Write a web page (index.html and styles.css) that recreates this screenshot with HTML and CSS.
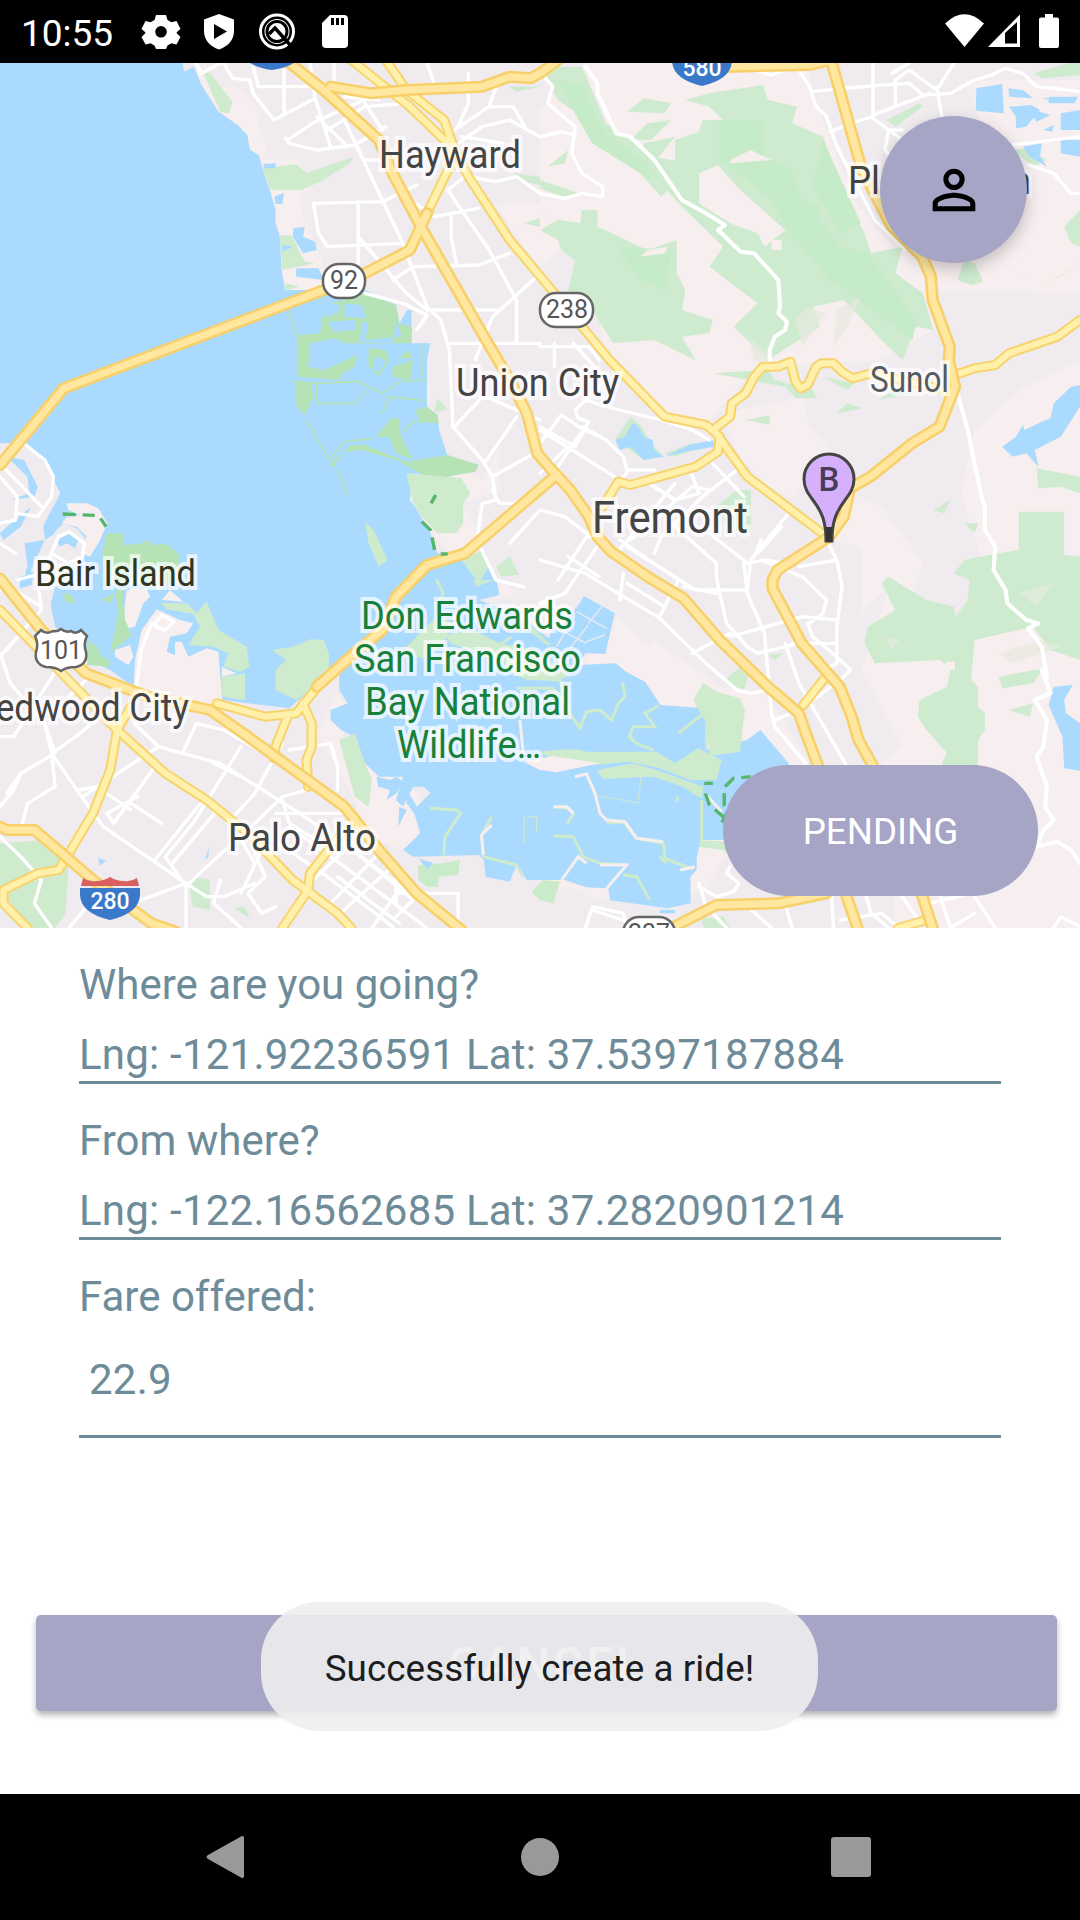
FILE: index.html
```html
<!DOCTYPE html>
<html lang="en">
<head>
<meta charset="utf-8">
<title>Ride request</title>
<link rel="stylesheet" href="styles.css">
</head>
<body>
<div class="screen">
  <header class="statusbar">
    <span class="clock">10:55</span>
    <svg class="status-icons" viewBox="0 0 220 63" aria-hidden="true">
      <g fill="#fff">
        <path fill-rule="evenodd" d="M25 15h10l1.500 5 4 2.200 5-1.200 4 8-3.800 3.200v1l3.800 3.800-4 7.500-5-1.200-4 2.200-1.500 3.500H25l-1.500-3.500-4-2.200-5 1.200-4-7.500 3.800-3.800v-1L10.500 29l4-8 5 1.200 4-2.200zM30 26a5.800 5.800 0 1 0 0 11.600A5.800 5.800 0 0 0 30 26z"/>
        <path fill-rule="evenodd" d="M88 14l15 5.500V31c0 9-6 15.500-15 18.500C79 46.500 73 40 73 31V19.500zM83 24v15l13-7.500z"/>
        <path d="M199 15h14q4 0 4 4v25q0 4-4 4h-18q-4 0-4-4V23z"/>
      </g>
      <circle cx="146" cy="31.500" r="16.500" fill="none" stroke="#fff" stroke-width="3"/>
      <circle cx="146" cy="31.500" r="12.500" fill="#fff"/>
      <circle cx="146" cy="31.500" r="10" fill="none" stroke="#000" stroke-width="3"/>
      <path d="M138 34l6-6 17 19" fill="none" stroke="#000" stroke-width="3.500"/>
      <path d="M201.500 18v7M206.500 18v7M211.500 18v7" stroke="#000" stroke-width="3"/>
    </svg>
    <svg class="signal-icons" viewBox="0 0 120 63" aria-hidden="true">
      <path fill="#fff" d="M0 23.500Q19.500 5 39 23.500L19.500 47z"/>
      <path fill="#fff" fill-rule="evenodd" d="M43 47L75 14.500V47zM60 33V43.500H72V22z"/>
      <path fill="#fff" d="M100 14h8v3.500h4q2 0 2 2V46q0 2-2 2H96q-2 0-2-2V19.500q0-2 2-2h4z"/>
    </svg>
  </header>

  <section class="map">
    <svg class="map-layer" viewBox="0 9 3136 2595" preserveAspectRatio="none" aria-hidden="true">
      <!-- terrain tint -->
      <g fill="#f7eeef">
        <path d="M560 9L590 40 650 80 700 85 755 160 750 200 778 265 755 300 870 300 905 390 870 400 880 480 920 560 940 620 930 700 800 700 750 300 600 150z"/>
        <path d="M1700 0H2340L2370 130 2420 260 2480 420 2560 520 2700 620 2720 800 2560 900 2200 920 2120 1010 2060 1090 1940 1060 1760 880 1700 560 1568 480 1568 150z"/>
        <path d="M1440 430L1568 430 1640 560 1570 620 1500 530z"/>
        <path d="M2100 1060L2330 1010 2350 1100 2420 1180 2300 1320 2220 1270 2140 1180z"/>
        <path d="M2700 600L3136 500V695H2730z"/><path d="M2800 60H3136V700H3010L2960 640 2900 560 2850 200z"/>
        <path d="M3136 900L2960 990 2830 1110 2790 1300 2850 1500 2880 1650 2740 1700 2600 1560 2500 1660 2500 1460 2410 1440 2480 1300 2560 1340 2680 1510 2640 1620 2580 1590 2500 1830 2620 2060 2560 2110 2600 2604H3136z"/>
        <path d="M1790 1670L1890 1760 1900 1740 2090 1880 2220 1900 2280 1990 2350 2110 2100 2400 2040 2500 1568 2480 1700 1800z"/>
        <path d="M1240 870L1260 1200 1400 1260 1450 1160 1450 1290 1340 1330 1390 1420 1380 1500 1500 1600 1450 1620 1300 1480 1180 1300z"/>
        <path d="M980 1900L1020 1960 990 2040 1080 2130 1180 2150 1240 2260 1190 2380 1080 2330 1020 2200 920 2020z"/>
      </g>
      <!-- bay -->
      <path fill="#abdaff" d="M0 9H530L535 35 563 20 585 75 635 155 690 195 718 225 726 270 752 285 768 345 785 395 800 450V490L812 525 818 630 828 690H1060L1150 735 1160 790 1182 750H1195V850H1250L1240 900V1040L1270 1065 1275 1110 1300 1190 1390 1215 1300 1250 1200 1240 1190 1320 1205 1340 1250 1420 1270 1480 1330 1490 1400 1500 1440 1550 1450 1605 1390 1620 1500 1660 1600 1740 1698 1610 1783 1670 1758 1780 1700 1780 1680 1815 1788 1810 1818 1835 1873 1865 1918 1935 2048 1945 2053 2070 2168 2040 2208 2010 2290 2110 2290 2200 2108 2340 2023 2340 2023 2430 2005 2450V2530L1938 2545 1768 2520V2505L1640 2460 1530 2460 1500 2415 1480 2465 1410 2450 1405 2400 1390 2385 1200 2390 1170 2370 1220 2320 1200 2250 1250 2200 1230 2180H1200L1170 2240 1150 2220 1170 2150 1100 2150 1060 2110 1030 2030 990 2010 960 1980V1950L1010 1930 985 1890V1830L910 1880 840 1945 720 1930 650 1920 400 1890 320 1830 260 1800 160 1700 140 1600 75 1550 70 1450 130 1440 125 1390 160 1330 175 1300 150 1250 75 1160 0 1200z"/>
      <!-- Redwood Shores and Bair Island land -->
      <g fill="#efebef"><path d="M0 1150L75 1150 140 1220 173 1300 125 1400 130 1440 70 1440 80 1520 40 1600 0 1540z"/><path d="M130 1440L190 1400 250 1440 240 1500 200 1560 160 1580 130 1700 90 1530z"/></g>
      <path fill="#abdaff" d="M20 1190L70 1200 110 1280 100 1310 30 1320 85 1300 80 1250zM60 1550L95 1540 80 1580zM0 1420L20 1400 90 1340 60 1400 10 1440z"/>
      <g transform="translate(0 1200) scale(.968 1)">
        <path fill="#f7eeef" d="M200 130L260 130 295 145 322 190 300 240 270 290 245 280 260 230 230 200 185 190 200 170 240 165 205 150zM380 390L440 385 450 410 430 430 405 500 385 505 370 470zM485 420L510 390 550 425zM345 570L390 555 400 590 385 615 345 590zM400 700L405 600 425 510 470 448 540 480 580 490 560 520 510 530 500 575 525 585 525 545 545 545 565 590 620 565 655 575 668 735 500 710z"/>
        <path fill="#efebef" d="M190 190L230 205 260 240 240 310 160 330 140 400 95 390 100 300 150 270 165 215z"/>
        <path fill="#ceebce" d="M482 428L560 430 590 460 620 425 655 510 740 560 748 620 720 635 670 620 685 580 640 560 565 555 600 500 580 462 500 448zM665 650L735 640V720L665 710z"/>
        <path fill="#f7eeef" d="M665 620L710 640 665 650z"/>
        <path fill="#abdaff" d="M170 240L210 220 235 240 225 265 200 250 180 260zM60 355L100 335 95 375 60 385z"/>
        <path fill="#b5e3b5" d="M320 220H372V255L430 250 440 240 460 255 495 250 540 285 535 350 480 380 350 370 305 290zM345 390H370L375 480 395 525 330 580 355 460zM190 400L215 405 225 430 195 425zM305 420L340 400 335 430zM262 540L290 560 305 590 330 600 328 620 262 615z"/>
      </g>
      <!-- parks and salt marsh -->
      <g fill="#ceebce">
        <path d="M590 40L610 38 675 125 665 160 640 155z"/><path d="M763 325L860 312 890 340 970 310 1025 292 1015 310 930 365 875 390H785z"/>
        <path d="M812 527L845 525 885 605 915 610 820 630zM828 670L870 680 830 690z"/>
        <path d="M1180 1240L1340 1255 1365 1300 1345 1330 1345 1390 1325 1420 1270 1420 1225 1370 1200 1330z"/>
        <path d="M1060 1385L1085 1410 1125 1500 1100 1520 1070 1450z"/>
        <path d="M800 1830L830 1800 790 1770 850 1760 900 1738 940 1740 955 1780 955 1820 985 1830 910 1880 860 1920 800 1890z"/>
        <path d="M985 2040L1030 2020 1060 2110 1080 2160 1070 2240 1030 2210z"/>
        <path d="M1270 1015L1300 1050 1262 1055z"/>
        <path d="M1440 1520L1480 1490 1508 1545 1455 1550zM1340 1500L1400 1470 1420 1520 1390 1570z"/>
        <path d="M550 2480L570 2450 610 2460V2550L560 2540zM680 2545L710 2540 725 2575zM0 2350L130 2340 200 2410 190 2560 160 2604H90L0 2490z"/>
        <path d="M2100 1865L2150 1820 2175 1840 2160 1890zM2230 1785L2275 1780 2250 1800z"/>
      </g>
      <path fill="#b5e3b5" d="M1060 700L1150 735 1160 790 1195 800V850H1005L970 835 900 850 895 920 940 930 1040 885 1025 925 995 940 985 960 865 950V825L930 820 935 775 980 760 990 735 960 730zM1070 865L1120 870 1130 900 1100 950 1070 920zM1180 870L1200 895H1160zM1140 920L1200 900 1190 960 1140 950zM855 960L900 965 910 1010 885 1065 862 1040zM1090 1130L1140 1070 1160 1080 1160 1120 1200 1200 1150 1180 1130 1130zM1205 1050L1240 1040 1270 1065 1275 1090 1220 1085zM1020 1155L1060 1155 1180 1205 1300 1185 1390 1215 1380 1235 1300 1250 1230 1245 1150 1200 1050 1170 1000 1175 965 1225 955 1215z"/>
      <path fill="none" stroke="#b5e3b5" stroke-width="5" d="M835 750L870 850M900 970L1040 965 1110 1000 1160 965 1240 960M920 970V1030H1030L1065 990M1120 1010L1235 1022M1130 1010L1110 1060M890 1080L955 1200 1000 1145 1080 1135M1165 1120L1200 1085H1270M980 1230L1010 1310M1225 855V950M940 710V790L1060 780 1160 830M1080 760L1070 850"/>
      <path fill="#abdaff" d="M940 725L975 735 970 760 940 765zM1000 730L1050 735 1065 775 1000 770zM1050 785L1070 790 1060 840 1165 830 1160 810 1150 780 1140 850 1045 845zM950 785L1030 780 1035 810 970 815zM1090 890L1120 900 1105 935 1080 930zM765 312L800 310V325H765zM797 410L825 398 820 432H800zM852 505L885 500 880 530 915 545 920 570 880 580 850 530zM820 555L850 560 820 575zM860 625L925 625 940 660 860 650z"/>
      <!-- wildlife refuge ponds -->
      <g transform="translate(987 1560) scale(.968 1)">
        <g fill="#ceebce">
          <path d="M180 220L290 110 340 130 310 190 250 235zM400 0H460L410 20zM320 170L400 150 480 190 590 210 690 290 640 300 560 300 500 260 420 220 330 190z"/>
          <path d="M1090 308L1130 335 1200 355 1215 390 1200 515 1110 528 1098 430 1060 360z"/>
          <path d="M600 515L700 505 740 515 870 515 950 515 1005 550 1075 505 1105 520 1145 540 1130 600 1050 600 960 565 870 545 760 555 640 540z"/>
          <path d="M770 570L880 550 950 570 1090 620 1085 655 1020 620 930 590 790 600zM1000 572L1060 520 1105 530 1100 590 1050 598zM1070 780L1180 785 1200 860 1150 810 1070 800z"/>
        </g>
        <path fill="#abdaff" d="M730 600L940 590 1030 620 1085 660 1082 780 1062 870 1000 860 970 800 890 775 850 725 790 715 750 650zM560 355L690 380 720 450 800 420 850 360 870 440 880 490 860 510 740 510 580 505z"/>
        <g fill="none" stroke="#ceebce" stroke-width="9">
          <path d="M500 265L560 295 660 300 690 400 720 445 740 395 780 390 815 420 835 370 855 350 848 308M530 325L640 325 690 390M955 378L915 400 945 440 880 440 868 470 890 490 940 510M1085 405L1015 460M1100 430V510M320 170L370 155 480 195 515 170M560 130L620 190M270 685L350 690 362 700 315 770 312 825M455 710L425 765 430 830 530 855 550 890M640 680L690 685 700 705 680 730M640 768L700 770 730 830 780 850 860 855M850 885L890 890 930 960M800 730L850 725 890 775 970 790 975 835 1060 868M960 830L980 850M1085 660V780M1010 665L1015 650M290 0L310 40 290 80 320 120M570 150L630 195"/>
          <path stroke-width="3" d="M553 705V790M560 710H590V760M760 645L900 670M905 580L895 660"/>
        </g>
        <path fill="none" stroke="#f7eeef" stroke-width="9" d="M540 420L550 520M705 590L740 582 765 640 780 700 800 720 855 725 890 775 970 785M665 900L715 830 740 850M780 855L860 855 800 925 805 955M640 680L680 680 700 700M455 735L425 765 430 825M1095 640L1145 695M1065 860L1020 870"/>
        <path fill="#f7eeef" d="M550 545L640 528 780 550 650 577 600 570zM700 920L800 925 810 960 760 955z"/>
        <path fill="#abdaff" d="M731 48L825 100 795 165 797 222 735 218 742 190 690 165 620 190 640 140 700 120z"/>
        <path fill="none" stroke="#e8ecf0" stroke-width="4" d="M710 95L800 145M745 130L790 75M620 130L740 190M690 205L745 135M650 200L690 130M740 185L795 165"/>
        <path fill="#c9ebc9" d="M235 855L310 850 360 840 355 885 295 890V920L260 920 235 900zM575 935L610 900 660 905 640 970 600 960z"/>
        <path fill="#abdaff" d="M235 835L280 850 262 868zM110 590L150 600 170 590 190 605 170 640 140 660 150 630 115 620zM195 625L220 660 265 740 245 730 200 670zM178 680L200 690 175 740zM210 790L265 760 230 800zM960 990H1005V1000H960z"/>
      </g>
      <!-- east bay ridge -->
      <g fill="#ceebcf">
        <path d="M2060 100L2215 75 2230 120 2315 140 2300 190 2390 230 2440 370 2510 520 2530 580 2620 560 2600 640 2680 700 2710 810 2660 800 2620 900 2560 840 2450 720 2360 740 2380 800 2290 860 2230 900 2130 800 2200 730 2060 620 2100 560 1980 440 1900 350 1790 260 1740 240 1690 170 1620 120 1568 20H1690L1760 190 1830 240 1900 290 2000 310 2120 300 2030 340 2030 430 2120 490 2200 520 2220 560 2280 510 2140 380 2080 310H1960V240L2030 215 2040 180 2100 180 2060 140 1990 120z"/>
        <path d="M1568 510L1620 480 1685 490 1690 450H1735V500L1880 570 1965 540V640L1990 690 1980 750 2070 780 2060 820 1980 830 2020 900 1900 840 1780 850 1700 720 1650 690 1670 600 1630 570 1620 540z"/>
        <path d="M1820 155L1870 115 1950 130 1930 160zM1830 240L1880 190 1950 180 1890 240zM1870 250L1960 230 1890 320 1980 350 1920 410 1850 330zM1568 360L1680 400 1630 410 1568 385zM1590 320L1650 270 1640 310z"/>
        <path d="M2070 940L2230 930 2250 960 2360 990 2370 1015 2310 1015 2280 980zM2390 950L2480 970 2460 990zM2550 1020L2600 990 2650 1000zM2430 1060L2460 1030 2505 1045zM2165 1080L2235 1065V1095zM2780 660L2800 600 2830 610 2855 665 2820 675zM3090 500L3136 450V560L3110 550zM2575 180L2670 130 2680 140 2600 200zM3000 40L3136 0V45L3030 55zM2940 270L2980 265 3040 300 3000 320zM3010 1225L3136 1250V1300L3080 1280 3015 1285z"/>
        <path d="M2560 1570L2580 1550 2690 1620 2770 1640 2775 1670 2810 1620 2815 1560 2770 1540 2800 1500 2900 1480 2958 1470V1355H3090V1485L3136 1490V1800L3050 1770 3000 1700 2830 1740 2820 1860 2840 1880V1940L2860 1960V2010L2840 2040V2120H2730L2750 2080 2690 2010 2665 1970 2670 1920 2750 1880 2760 1830 2730 1800 2540 1810 2510 1750 2520 1700 2600 1650z"/>
        <path d="M2900 1850L3030 1825 3000 1870 2910 1885zM2930 1950L3000 1930 2990 1970zM2710 1350L2760 1320 2740 1360zM2800 1390H2840L2830 1420zM2080 1340L2140 1290H2180V1420L2110 1400z"/>
        <path d="M1785 1140L1830 1070 1860 1095 1890 1150 1920 1180 1870 1200zM1930 1180L2010 1150 2070 1150 1960 1190z"/>
        <path d="M1490 340L1568 350V375L1500 360zM1520 490L1568 475V500zM1475 80H1568L1500 95z"/>
        <path d="M2035 2575L2100 2570 2120 2604H2045z"/>
      </g>
      <g fill="#c6ebc8">
        <path d="M2090 180L2220 180 2215 290 2300 330 2320 400 2440 560 2520 580 2660 780 2650 840 2470 700 2410 660 2280 500 2240 420 2170 360 2090 300zM2390 240L2500 490 2440 520 2360 380zM1620 60L1690 80 1760 220 1880 310 1890 360 1720 250 1680 180zM1790 560L1950 570 1930 690 1860 660zM2320 420L2380 440 2360 560 2300 540z"/>
      </g>
      <g fill="#e6e9de" opacity=".7"><path d="M2310 780L2340 740 2400 760 2330 860zM2430 750L2500 710 2460 800 2420 860zM2170 830L2230 880 2260 930 2190 900zM2570 1730L2610 1740 2590 1770zM2900 1780L3020 1740 3080 1760 2940 1810zM2960 1600L3060 1570 3010 1640zM3020 680L3136 610 3080 650zM2700 2500L2760 2460 2830 2480z"/></g>
      <path fill="#f7eeef" d="M2240 540h30v30h-30zM2745 1805h28v25h-28zM1880 570L1940 560 1930 580 1860 590zM2120 300L2180 270 2240 300 2120 310zM2700 590L2640 570 2650 630z"/>
      <!-- lakes -->
      <g fill="#abdaff">
        <path d="M2835 85L2910 72 2915 160 2833 152zM2928 85L2970 90 3000 115 2930 110zM2930 140L2995 135 3020 150 2980 200 2950 205V170zM2985 145L3050 165 3010 185zM3025 115H3085V130zM3045 110H3130L3120 130H3045zM3080 160L3136 150V210H3080zM3080 240H3136V290L3080 280zM2970 260L3025 250 3020 290 3040 320 2990 290zM3030 210L3060 195 3055 215z"/>
        <path d="M3136 975L3110 980 3060 1030 3050 1075 3015 1090 2975 1110 2970 1095 2950 1130 2910 1160 2940 1190 2980 1180 3015 1220 3005 1170 3080 1130 3136 1040z"/>
        <path d="M3060 1880L3115 1875 3090 1920 3095 1960 3136 1990V2132L3090 2125 3085 2030 3045 1935z"/>
        <path d="M1787 1140L1815 1130 1835 1090 1850 1095 1870 1130 1895 1140 1900 1170 1928 1190 1870 1200 1830 1160 1800 1170zM1930 1190L2000 1155 2070 1140 2075 1160 1990 1175z"/>
        <path d="M285 2395L308 2402 290 2418zM595 2400L608 2360 605 2390zM2775 1180L2795 1200z"/>
      </g>
      <!-- local streets -->
      <g class="streets">
        <path d="M570 9L585 40 640 10M650 9L675 55 725 60 735 100 795 180 915 115 900 9M735 20L750 80H910M825 30V160M835 240L915 185 1100 100M915 115L960 260M1000 180L1165 540 1240 740 1280 780 1305 870 1315 1100 1400 1200 1430 1250 1440 1320M910 430L925 520 950 560 1170 550M910 430L1110 425 1210 375M1040 425V610M1040 530L1180 700 1240 750H1440M1140 660L1200 620 1390 615 1480 580M1150 390L1260 470 1390 445M1310 470V530L1325 610M1300 390L1420 570 1500 720V845M1570 640L1430 770 1380 900M1305 850H1568M1320 1100L1410 1000M1410 1010L1568 1080M1500 1070L1410 1205M1568 1170L1430 1250M1060 700L1170 730 1240 765 1210 810"/>
        <path d="M830 235L840 250 920 270 1030 255 1120 200M920 170L1010 260M950 210L1060 140 1180 130M1000 110L1100 120M1240 9L1260 70M1360 40V130L1330 200M1320 210L1420 140 1490 140 1530 210M1330 250L1400 200 1480 180 1568 230M1340 230L1460 250M1060 300L1130 300M1060 130L1110 210M970 9V70M1420 140L1440 80M1360 350L1440 365 1500 350 1568 400M1300 390L1350 350"/>
        <path d="M1580 50L1605 80 1590 130 1670 200 1660 280 1690 340 1750 380V410L1690 400 1640 415 1568 400M1568 230L1630 215 1670 225"/>
        <path class="wide" d="M1700 20L1735 70 1735 100 1790 220 1830 230 1900 300 1980 420 2050 460 2105 495 2085 510 2150 575 2190 580 2260 660 2265 740 2260 760 2285 785 2280 810 2250 830 2235 870 2235 900"/>
        <path d="M2320 30L2350 80 2370 140 2400 170 2430 260 2490 380 2540 480 2630 570M2355 95L2560 75 2640 70 2680 105 2760 100 2830 60 2880 45 2920 25 2970 40 3010 80 3060 85 3136 95M2535 9V170L2500 180 2410 215M2535 165L2700 100M2535 175L2620 240M2620 210H2580L2570 270 2620 330M2600 130V60L2640 30 2720 90 2770 9M2720 80L2735 170M2940 255L3136 230M2990 315L3060 340 3110 400H3136M2640 9L2590 40M2190 30L2240 45 2280 30"/>
        <path class="wide" d="M2780 1000L2810 1110 2850 1310 2860 1340V1410L2890 1460 2885 1530 2920 1590 2925 1630 2980 1680 3015 1690 2985 1705 3025 1760 3040 1850 3025 1830 3050 1900 3005 1920 3040 1980 3030 2060 3010 2090 3040 2180 3035 2240 3060 2280 3030 2310 3010 2360 3070 2345 3110 2370 3136 2410"/>
      </g>
      <g class="streets">
        <path d="M1568 860H1710L1740 900M1610 850V920M1665 850L1760 960 1700 1020 1670 1050 1680 1075 1710 1085 1670 1160 1568 1100M1700 1020L1760 1040 1920 1080 2010 1110 2060 1140M1690 1100L1760 1140 1810 1190 1820 1230 1900 1230M1568 1150L1630 1065 1680 1100 1760 1140M1568 1110L1800 1260 1830 1270M1710 1085L1600 1250M1568 1240L1650 1160M1820 1240L1770 1290M1870 1260L1960 1320 2030 1300 2000 1220M1960 1270L1790 1480M2060 1200L2160 1310M2140 1230L2040 1310 1920 1430 1900 1480M1830 1440L2010 1280 2060 1290"/>
        <path d="M1440 1320L1400 1330 1385 1440 1440 1560 1520 1580M1430 1290L1450 1330H1500M1480 1450L1568 1350M1568 1350L1640 1370 1740 1450 1640 1600 1568 1630M1568 1500L1700 1540 1810 1610 1910 1670 2050 1810 2140 1890 2180 1900 2230 1890M1650 1490L1740 1550M1800 1440L1970 1560 1915 1670M1820 1570L1930 1640M1810 1540L1800 1620M1620 1560L1710 1420M1820 1460L2020 1590 2170 1590 2180 1500 2290 1360M1950 1390L2080 1510 2080 1550 2090 1600 2110 1690 2170 1760 2200 1780 2320 1750M2060 1420L2170 1510 2220 1500 2280 1510M2160 1510L2170 1600 2220 1720 2240 1960 2250 2000 2340 2110M2210 1440L2190 1490M2270 1400L2200 1480M2210 1500L2330 1550 2400 1620 2390 1660 2350 1690M2120 1730L2330 1670 2430 1680M2010 1780L2120 1720M2280 1750L2320 1870 2370 1960 2460 2120M2400 1440L2430 1500 2445 1580 2430 1700V1810L2390 1830M2320 1520L2430 1500M2345 1690L2360 1730 2430 1790 2470 1830 2440 1860 2360 1920M2250 1980L2320 1950M2300 1750H2430M1985 1580L2080 1600"/>
        <path d="M1700 2604L1720 2540 1810 2560 1820 2604M1720 2550L1880 2604M2030 2480L2080 2510 2130 2495 2145 2470 2110 2440 2120 2420M2030 2470L2050 2540 2110 2604M2160 2530L2240 2604M2280 2530L2300 2604M2415 2510L2420 2604M2515 2510L2530 2560 2580 2604M2620 2510L2660 2570M2730 2510L2760 2604 2830 2560M2830 2510L2890 2604M2440 2580L2560 2560 2610 2604M2700 2530L2820 2500M3060 2604L3080 2570 3136 2600"/>
        <path d="M0 1250L50 1310 45 1380 0 1390M75 1155L130 1200 155 1250 150 1310 110 1370 50 1360M0 1210L120 1340M0 1450L45 1480M110 1570L170 1430 200 1415 245 1450 240 1490 200 1510 150 1480M110 1570L120 1650 60 1720 0 1790M50 1560L120 1540M40 1590L120 1640M20 1560L0 1590M480 1710L440 1690 410 1770 395 1890M450 1690L470 1665 505 1685 480 1710 450 1700"/>
        <path d="M0 1780L30 1870 130 1990 150 2080 230 2200 300 2300 540 2470 600 2510 650 2510 740 2470M0 2030H40L170 1820M260 1850L200 1910M130 1990L160 2080 60 2140 40 2190 0 2240M60 2310L80 2230 160 2180 150 2080 220 2030 290 1970M60 2140L20 2200M390 1990L460 2060 530 2080 640 2110 870 2260 1010 2360 1190 2500 1300 2590M530 2080L570 1990 650 2010 750 2070M460 2060L240 2210M400 2210L310 2260 330 2290 450 2120M230 2190L280 2180 380 2250M590 2220L450 2400M640 2240L500 2410M700 2060L560 2290 480 2390 540 2480V2604M820 2050L740 2200 660 2290M840 2070L960 2050 980 2120V2190M890 2190L820 2210 740 2290 600 2420 540 2480M620 2110L700 2150M0 2330L60 2390 120 2460 100 2530 150 2604M200 2604L260 2530 410 2520 540 2470M380 2230L470 2290M640 2460L620 2530 700 2604M740 2380L770 2450 720 2500 760 2560 800 2540M700 2340L740 2410M760 2370L700 2500"/>
        <path d="M800 2260H1000M780 2330L950 2450 1140 2600M840 2300L1040 2450 1240 2604M1040 2330L900 2470 860 2530M1100 2380L960 2530M1140 2420L1030 2520 990 2560M1180 2460L1080 2604M1150 2430V2530M1160 2500H1330V2604M1210 2510L1150 2570M820 2220L840 2290 950 2360M1060 2400L1200 2520M980 2450L1160 2590"/>
      </g>
      <!-- regional roads -->
      <g class="minor-case">
        <path d="M1310 240L1360 350 1480 540 1610 700 1770 900 1930 1070 2050 1095 2080 1120 2170 1250 2260 1320 2400 1430"/><path d="M2070 1110L2120 1070 2125 1030 2165 1000 2190 950 2215 920 2260 920 2295 905 2310 965 2325 985 2345 975 2370 920 2385 910 2420 910 2445 935 2475 955 2530 940 2700 980 2760 995"/><path d="M2773 945L2830 925 2890 915 2930 880 3070 830 3136 780"/><path d="M2090 1130L2085 1175 2020 1220 1830 1275 1795 1265 1750 1340"/><path d="M0 1650L180 1840 330 2000 480 2140 600 2220 720 2320 850 2460 980 2560 1020 2604"/><path d="M380 1940L340 2010 320 2130 270 2260 200 2380 170 2430 110 2440 10 2490 10 2530 80 2604"/><path d="M1000 2310L900 2440 895 2490 820 2604"/><path d="M930 1870L860 1960 770 1970 630 1930M880 1930L905 1990V2060L890 2100 895 2180M835 1970L800 2060 795 2095M1310 240V310L1240 460M1020 0L1190 140 1310 260M1120 0L1180 90 1290 180 1310 240M2608 2604L2690 2580M2333 1935L2390 1860"/>
      </g>
      <g class="minor-fill">
        <path d="M1310 240L1360 350 1480 540 1610 700 1770 900 1930 1070 2050 1095 2080 1120 2170 1250 2260 1320 2400 1430"/><path d="M2070 1110L2120 1070 2125 1030 2165 1000 2190 950 2215 920 2260 920 2295 905 2310 965 2325 985 2345 975 2370 920 2385 910 2420 910 2445 935 2475 955 2530 940 2700 980 2760 995"/><path d="M2773 945L2830 925 2890 915 2930 880 3070 830 3136 780"/><path d="M2090 1130L2085 1175 2020 1220 1830 1275 1795 1265 1750 1340"/><path d="M0 1650L180 1840 330 2000 480 2140 600 2220 720 2320 850 2460 980 2560 1020 2604"/><path d="M380 1940L340 2010 320 2130 270 2260 200 2380 170 2430 110 2440 10 2490 10 2530 80 2604"/><path d="M1000 2310L900 2440 895 2490 820 2604"/><path d="M930 1870L860 1960 770 1970 630 1930M880 1930L905 1990V2060L890 2100 895 2180M835 1970L800 2060 795 2095M1310 240V310L1240 460M1020 0L1190 140 1310 260M1120 0L1180 90 1290 180 1310 240M2608 2604L2690 2580M2333 1935L2390 1860"/>
      </g>
      <!-- freeways -->
      <g class="major-case">
        <path d="M830 0L940 90 1100 240 1140 340 1222 500 1400 820 1480 960 1530 1060 1560 1180 1598 1225 1656 1290 1710 1370 1735 1430 1775 1475 1880 1550 1985 1615 2090 1740 2230 1880 2320 1960 2340 2020 2380 2130 2458 2508 2490 2604"/><path d="M2413 0L2503 330 2590 500 2678 590 2703 650 2708 720 2758 860 2755 900 2773 980 2728 1100 2648 1150 2528 1250 2468 1285 2450 1370 2408 1430 2258 1530 2243 1560V1585L2328 1750 2438 1880 2473 1970 2493 2040 2533 2115 2678 2508 2708 2604"/><path d="M0 1215L185 985 940 690 1060 640 1190 570 1222 500 1240 460"/><path d="M960 80L1080 100 1180 90 1400 80 1480 50 1540 55 1568 40 1620 0"/><path d="M2000 25L2130 20 2350 15 2413 0"/><path d="M1610 1250L1350 1480 1240 1515 1150 1610 1110 1710 1040 1770 920 1880"/><path d="M0 1555L120 1710 250 1840 430 1910 610 1950 720 2030 880 2150 1000 2240 1100 2370 1210 2500 1340 2610"/><path d="M0 2300L20 2310H100L180 2380 270 2460 400 2560 440 2590 510 2615"/><path d="M1950 2604L2080 2535 2260 2530 2400 2500"/>
      </g>
      <g class="major-fill">
        <path d="M830 0L940 90 1100 240 1140 340 1222 500 1400 820 1480 960 1530 1060 1560 1180 1598 1225 1656 1290 1710 1370 1735 1430 1775 1475 1880 1550 1985 1615 2090 1740 2230 1880 2320 1960 2340 2020 2380 2130 2458 2508 2490 2604"/><path d="M2413 0L2503 330 2590 500 2678 590 2703 650 2708 720 2758 860 2755 900 2773 980 2728 1100 2648 1150 2528 1250 2468 1285 2450 1370 2408 1430 2258 1530 2243 1560V1585L2328 1750 2438 1880 2473 1970 2493 2040 2533 2115 2678 2508 2708 2604"/><path d="M0 1215L185 985 940 690 1060 640 1190 570 1222 500 1240 460"/><path d="M960 80L1080 100 1180 90 1400 80 1480 50 1540 55 1568 40 1620 0"/><path d="M2000 25L2130 20 2350 15 2413 0"/><path d="M1610 1250L1350 1480 1240 1515 1150 1610 1110 1710 1040 1770 920 1880"/><path d="M0 1555L120 1710 250 1840 430 1910 610 1950 720 2030 880 2150 1000 2240 1100 2370 1210 2500 1340 2610"/><path d="M0 2300L20 2310H100L180 2380 270 2460 400 2560 440 2590 510 2615"/><path d="M1950 2604L2080 2535 2260 2530 2400 2500"/>
      </g>
      <!-- trails -->
      <path fill="none" stroke="#55b76c" stroke-width="10" stroke-dasharray="38 20" d="M182 1362L275 1366M292 1375L308 1400M1225 1385L1250 1410 1262 1470M1280 1482H1300M1265 1305L1252 1330M2045 2170H2070M2048 2200L2060 2235 2100 2270M2105 2180L2130 2155 2180 2150M2103 2200V2235L2115 2250 2090 2300"/>
    </svg>

    <svg class="map-layer" viewBox="0 63 1080 865">
      <g class="place">
        <text x="379" y="168" textLength="142" lengthAdjust="spacingAndGlyphs">Hayward</text>
        <text x="456" y="396" textLength="163" lengthAdjust="spacingAndGlyphs">Union City</text>
        <text x="592" y="533" textLength="156" lengthAdjust="spacingAndGlyphs" class="city">Fremont</text>
        <text x="870" y="392" textLength="79" lengthAdjust="spacingAndGlyphs" class="town">Sunol</text>
        <text x="848" y="194" textLength="183" lengthAdjust="spacingAndGlyphs">Pleasanton</text>
        <text x="35" y="586" textLength="161" lengthAdjust="spacingAndGlyphs" class="island">Bair Island</text>
        <text x="-26" y="721" textLength="215" lengthAdjust="spacingAndGlyphs">Redwood City</text>
        <text x="228" y="851" textLength="148" lengthAdjust="spacingAndGlyphs">Palo Alto</text>
      </g>
      <g class="place refuge">
        <text x="361" y="629" textLength="212" lengthAdjust="spacingAndGlyphs">Don Edwards</text>
        <text x="354" y="672" textLength="227" lengthAdjust="spacingAndGlyphs">San Francisco</text>
        <text x="365" y="715" textLength="205" lengthAdjust="spacingAndGlyphs">Bay National</text>
        <text x="397" y="758" textLength="144" lengthAdjust="spacingAndGlyphs">Wildlife…</text>
      </g>
      <g class="shield">
        <rect x="323" y="264" width="42" height="34" rx="16"/><text x="344" y="289">92</text>
        <rect x="540" y="293" width="53" height="34" rx="16"/><text x="567" y="318">238</text>
        <rect x="623" y="917" width="52" height="34" rx="16"/><text x="649" y="942">237</text>
        <path d="M41 630Q46 635 53 631Q57 632 61 629Q66 633 71 631Q76 635 81 630L87 636Q83 644 86 652Q88 664 76 667Q66 667 61 671Q56 667 46 667Q34 664 36 652Q39 644 35 636z"/><text x="61" y="659">101</text>
      </g>
      <g class="interstate">
        <path class="blue" d="M80 888H140V894Q140 913 110 920Q80 913 80 894z"/>
        <path class="red" d="M83 878Q89 882 96 881Q104 881 110 877Q116 881 124 881Q131 882 137 878L139 886H81z"/>
        <path class="blue" d="M672 50H732V60Q732 79 702 86Q672 79 672 60zM243 40H301V50Q301 66 272 70Q243 66 243 50z"/>
        <text x="110" y="909">280</text><text x="702" y="76">580</text>
      </g>
      <g class="pin">
        <path d="M829 454a25 25 0 0 1 25 25c0 16-13 21-19 39q-3 9-3 23h-6q0-14-3-23c-6-18-19-23-19-39a25 25 0 0 1 25-25z"/>
        <path class="tip" d="M829 527V542"/>
        <text x="829" y="491">B</text>
      </g>
    </svg>

    <button class="profile" aria-label="Profile">
      <svg viewBox="0 0 24 24"><path d="M12 5.900a2.100 2.100 0 1 1 0 4.200 2.100 2.100 0 0 1 0-4.200m0 9c2.970 0 6.100 1.460 6.100 2.100v1.100H5.900V17c0-.64 3.130-2.100 6.100-2.100M12 4a4 4 0 1 0 0 8 4 4 0 0 0 0-8zm0 9c-2.670 0-8 1.340-8 4v3h16v-3c0-2.660-5.330-4-8-4z"/></svg>
    </button>
    <div class="ride-status">PENDING</div>
  </section>

  <main class="form">
    <label class="label">Where are you going?</label>
    <div class="value">Lng: -121.92236591 Lat: 37.5397187884</div>
    <label class="label">From where?</label>
    <div class="value">Lng: -122.16562685 Lat: 37.2820901214</div>
    <label class="label">Fare offered:</label>
    <div class="value fare">22.9</div>
  </main>

  <div class="actions">
    <button class="cancel">CANCEL</button>
    <div class="toast">Successfully create a ride!</div>
  </div>

  <nav class="navbar">
    <svg viewBox="0 0 1080 126" aria-hidden="true"><g fill="#999">
      <path d="M241 42.500Q244 41 244 44V82Q244 85 241 83.500L208 65Q205 63 208 61z"/>
      <circle cx="540" cy="63" r="19"/><rect x="831" y="43" width="40" height="40" rx="3"/>
    </g></svg>
  </nav>
</div>
</body>
</html>
```

FILE: styles.css
```css
* { box-sizing: border-box; }
body { margin: 0; background: #fff; font-family: Roboto, "Liberation Sans", sans-serif; }
button { border: 0; padding: 0; font: inherit; }

.screen { width: 1080px; height: 1920px; display: flex; flex-direction: column; overflow: hidden; }

.statusbar { height: 63px; flex: none; background: #000; color: #fff; display: flex; align-items: center; padding: 0 15px 0 21px; }
.clock { width: 114px; font-size: 37px; line-height: 63px; padding-top: 3px; }
.status-icons { width: 220px; height: 63px; margin-left: -4px; }
.signal-icons { width: 120px; height: 63px; margin-left: auto; }

.map { position: relative; height: 865px; flex: none; background: #efebef; overflow: hidden; }
.map-layer { position: absolute; left: 0; top: 0; width: 1080px; height: 865px; }

.streets, .minor-case, .minor-fill, .major-case, .major-fill { fill: none; stroke-linejoin: round; stroke-linecap: round; }
.streets { stroke: #fff; stroke-width: 10px; }
.streets .wide { stroke-width: 12px; }
.minor-case { stroke: #f7d46e; stroke-width: 30px; }
.minor-fill { stroke: #fff0ab; stroke-width: 18px; }
.major-case { stroke: #f8d06a; stroke-width: 36px; }
.major-fill { stroke: #ffe7a0; stroke-width: 21px; }

.place { font-size: 39px; fill: #444; stroke: #fff; stroke-opacity: .7; stroke-width: 8px; stroke-linejoin: miter; paint-order: stroke; }
.place .city { font-size: 44px; }
.place .town { font-size: 36px; fill: #555b63; }
.place .island { font-size: 37px; fill: #30351f; }
.refuge { fill: #188038; }

.shield { stroke: #666; stroke-width: 2.500px; fill: #fff; }
.shield text { fill: #555; stroke: none; font-size: 25px; text-anchor: middle; }
.interstate .blue { fill: #3a78c9; }
.interstate .red { fill: #d9605f; }
.interstate text { fill: #fff; font-size: 23px; font-weight: 500; text-anchor: middle; }
.pin { fill: #d5b0fb; stroke: #444; stroke-width: 3px; }
.pin .tip { stroke: #333; stroke-width: 6px; }
.pin text { fill: #493b55; stroke: none; font-size: 33px; font-weight: 500; text-anchor: middle; }

.profile { position: absolute; left: 880px; top: 53px; width: 147px; height: 147px; border-radius: 50%; background: #a6a5c6; display: flex; align-items: center; justify-content: center; box-shadow: 0 6px 16px rgba(0, 0, 0, .22); }
.profile svg { width: 64px; height: 64px; }
.ride-status { position: absolute; left: 723px; top: 702px; width: 315px; height: 131px; border-radius: 66px; background: #a6a5c6; color: #fff; font-size: 36.750px; line-height: 134px; text-align: center; }

.form { height: 604px; flex: none; padding: 32px 79px 0; color: #6d8b98; font-size: 42px; line-height: 50px; display: flex; flex-direction: column; }
.label { height: 50px; margin-bottom: 20px; }
.value { height: 54px; margin-bottom: 32px; border-bottom: 3px solid #6d8b98; white-space: nowrap; flex: none; letter-spacing: .22px; }
.value.fare { height: 96px; padding: 13px 10px 0; margin-bottom: 0; }

.actions { position: relative; height: 262px; flex: none; padding: 83px 23px 0 36px; }
.cancel { display: block; width: 100%; height: 96px; border-radius: 5px; background: #a6a5c6; color: #fff; font-size: 47px; font-weight: 500; letter-spacing: 3px; box-shadow: 0 4px 6px rgba(0, 0, 0, .3); }
.toast { position: absolute; left: 261px; top: 70px; width: 557px; height: 129px; border-radius: 58px; background: rgba(238, 238, 238, .9); color: #1d1d1d; font-size: 36.750px; line-height: 133px; letter-spacing: .1px; text-align: center; white-space: nowrap; }

.navbar { height: 126px; flex: none; background: #000; }
.navbar svg { display: block; width: 1080px; height: 126px; }
```
